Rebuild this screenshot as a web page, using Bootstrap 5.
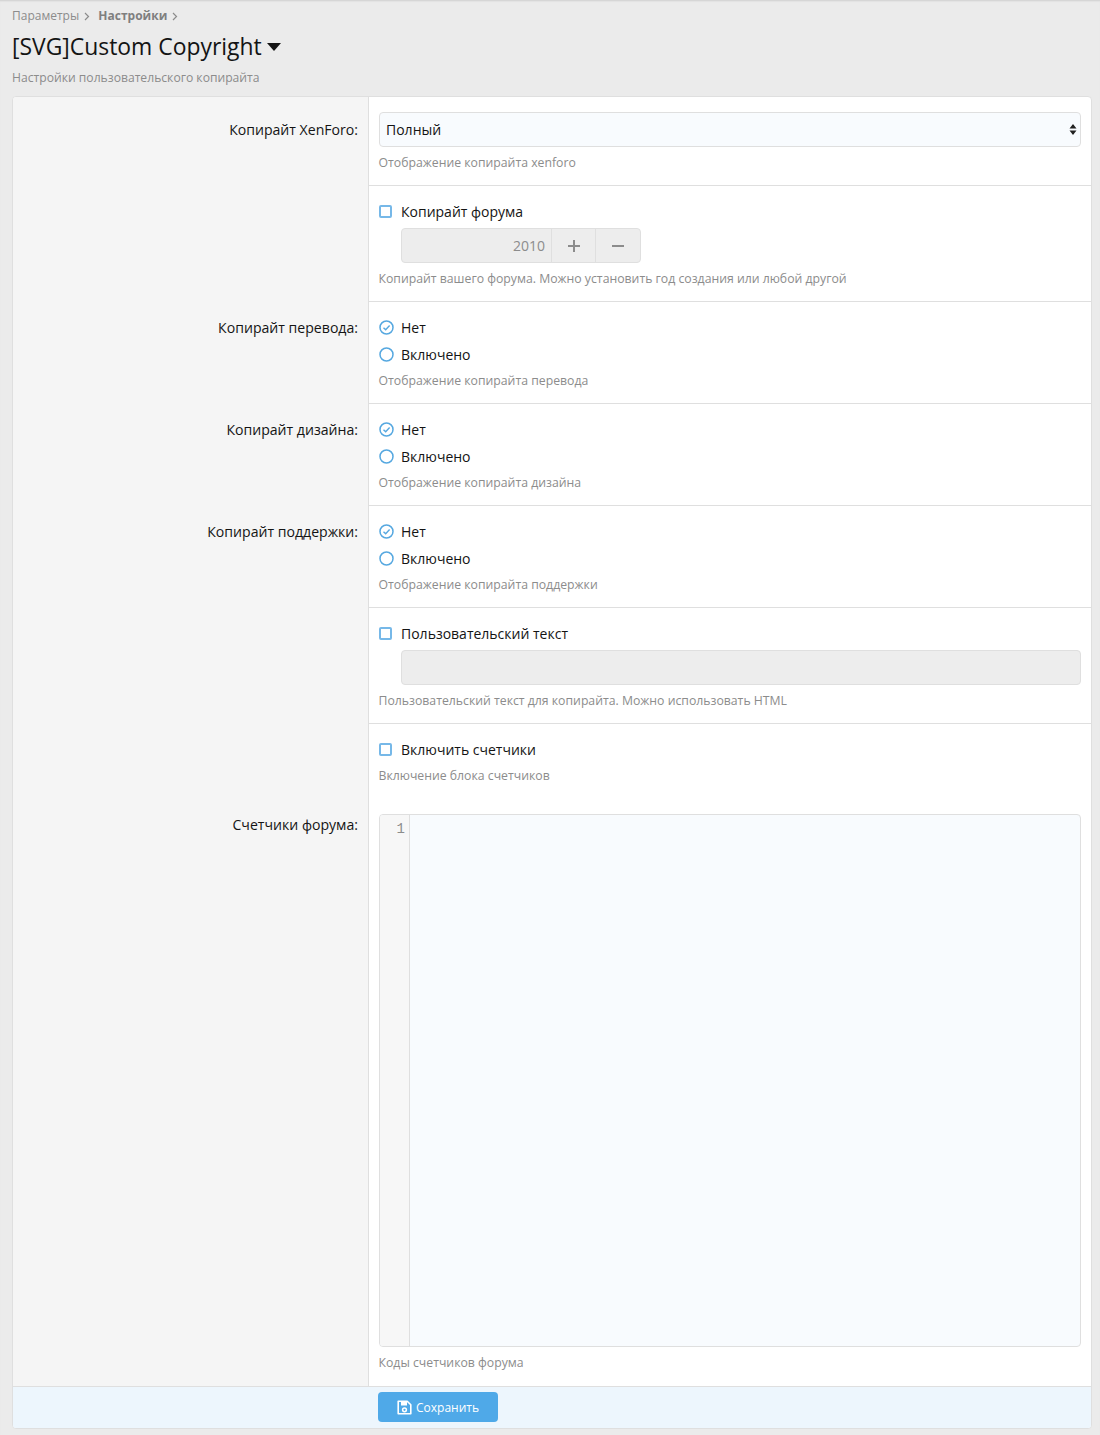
<!DOCTYPE html>
<html lang="ru">
<head>
<meta charset="utf-8">
<title>[SVG]Custom Copyright</title>
<link href="https://cdn.jsdelivr.net/npm/bootstrap@5.3.0/dist/css/bootstrap.min.css" rel="stylesheet">
<style>
html,body{height:100%}
body{background:#ebebeb;font-family:"Open Sans","Noto Sans","Liberation Sans",sans-serif;font-size:14px;line-height:20px;color:#141414;box-shadow:inset 0 2px 2px -1px #cfcfcf}
.page-wrap{padding:7px 8px 0 12px}
.crumbs{font-size:12px;line-height:18px;color:#8c8c8c;height:18px}
.crumbs b{color:#7f7f7f;font-weight:700}
.crumbs svg{margin:0 4px 0 4px;vertical-align:-1px}
.page-title{font-size:22.9px;line-height:32px;font-weight:400;margin:6px 0 0;color:#141414}
.title-caret{display:inline-block;width:0;height:0;border-left:7px solid transparent;border-right:7px solid transparent;border-top:8px solid #141414;vertical-align:4px;margin-left:5px}
.page-desc{font-size:12.15px;line-height:18px;color:#8c8c8c;margin-top:6px;height:18px}
.form-panel{margin-top:9px;border:1px solid #dfdfdf;border-radius:4px;background:#fff;overflow:hidden;width:1080px}
.form-line{display:flex}
.line-label{width:355px;flex:none;background:#f5f5f5;text-align:right;padding:16px 10px 0 0;font-size:14.1px;line-height:20px;color:#141414}
.line-label.lbl-first{padding-top:23px}
.line-label.lbl-code{padding-top:17px}
.line-body{flex:1;border-left:1px solid #dfdfdf;border-bottom:1px solid #dfdfdf;padding:12px 10px 13px}
.line-body.no-rule{border-bottom:0}
.line-body.pad-select{padding-top:15px}
.line-body.pad-code{padding:16px 10px 14px}
.hint{font-size:12.25px;line-height:18px;color:#8c8c8c;margin-left:-.5px}
.select-box{height:35px;background:#f8fbfe;border:1px solid #dfdfdf;border-radius:4px;padding:0 3px 0 6px;display:flex;align-items:center;justify-content:space-between;margin-bottom:7px}
.check-row{display:flex;align-items:center;height:27px;gap:9px}
.check-row:has(+ .hint){margin-bottom:4px}
.check-box{width:13px;height:13px;border:2px solid #76b8e8;border-radius:2px;flex:none}
.radio-dot{width:15px;height:15px;flex:none;margin-right:-2px}
.field-off{height:35px;background:#ededed;border:1px solid #dfdfdf;border-radius:4px;margin:3px 0 7px 22px}
.spin-box{display:flex;height:35px;width:240px;margin:3px 0 7px 22px;background:#ededed;border:1px solid #dfdfdf;border-radius:4px;color:#8c8c8c}
.spin-val{flex:1;text-align:right;padding-right:6px;line-height:33px}
.spin-btn{width:44px;border-left:1px solid #dfdfdf;display:flex;align-items:center;justify-content:center}
.spin-btn:last-child{width:45px}
.code-box{height:533px;display:flex;background:#f8fbfe;border:1px solid #dfdfdf;border-radius:4px;overflow:hidden;margin-bottom:7px}
.code-gutter{width:30px;background:#f7f7f7;border-right:1px solid #dfdfdf;text-align:right;padding:4px 4px 0 0;font-family:"Liberation Mono","DejaVu Sans Mono",monospace;font-size:14px;line-height:20px;color:#8c8c8c}
.save-bar{height:42px;background:#edf6fd;border-top:1px solid #dfdfdf;padding:5px 0 0 365px}
.save-btn{display:inline-flex;align-items:center;justify-content:center;gap:4px;width:120px;height:30px;background:#4fa9e8;border:0;border-radius:4px;color:#fff;font-size:12px;padding:1px 0 0}
.save-btn:hover{background:#4fa9e8;color:#fff}
</style>
</head>
<body>
<div class="page-wrap">
  <div class="crumbs">Параметры<svg width="8" height="9" viewBox="0 0 8 9"><path d="M2 1l3.5 3.5L2 8" fill="none" stroke="#8c8c8c" stroke-width="1.2"/></svg> <b>Настройки</b><svg width="8" height="9" viewBox="0 0 8 9"><path d="M2 1l3.5 3.5L2 8" fill="none" stroke="#8c8c8c" stroke-width="1.2"/></svg></div>
  <h1 class="page-title">[SVG]Custom Copyright<span class="title-caret"></span></h1>
  <div class="page-desc">Настройки пользовательского копирайта</div>
  <div class="form-panel">
    <div class="form-line">
      <div class="line-label lbl-first">Копирайт XenForo:</div>
      <div class="line-body pad-select">
        <div class="select-box"><span>Полный</span><svg width="8" height="11" viewBox="0 0 8 11"><path d="M4 0l3.5 4.5h-7zM4 11L.5 6.5h7z" fill="#222"/></svg></div>
        <div class="hint">Отображение копирайта xenforo</div>
      </div>
    </div>
    <div class="form-line">
      <div class="line-label"></div>
      <div class="line-body">
        <div class="check-row"><span class="check-box"></span>Копирайт форума</div>
        <div class="spin-box"><div class="spin-val">2010</div>
          <div class="spin-btn"><svg width="12" height="12" viewBox="0 0 12 12"><path d="M6 0v12M0 6h12" stroke="#8c8c8c" stroke-width="2"/></svg></div>
          <div class="spin-btn"><svg width="12" height="12" viewBox="0 0 12 12"><path d="M0 6h12" stroke="#8c8c8c" stroke-width="2"/></svg></div></div>
        <div class="hint">Копирайт вашего форума. Можно установить год создания или любой другой</div>
      </div>
    </div>
    <div class="form-line">
      <div class="line-label">Копирайт перевода:</div>
      <div class="line-body">
        <div class="check-row"><svg class="radio-dot" viewBox="0 0 15 15"><circle cx="7.5" cy="7.5" r="6.5" fill="none" stroke="#56a8e0" stroke-width="1.5"/><path d="M4.5 7.7l2.2 2.1 3.9-4.2" fill="none" stroke="#56a8e0" stroke-width="1.4"/></svg>Нет</div>
        <div class="check-row"><svg class="radio-dot" viewBox="0 0 15 15"><circle cx="7.5" cy="7.5" r="6.5" fill="none" stroke="#56a8e0" stroke-width="1.5"/></svg>Включено</div>
        <div class="hint">Отображение копирайта перевода</div>
      </div>
    </div>
    <div class="form-line">
      <div class="line-label">Копирайт дизайна:</div>
      <div class="line-body">
        <div class="check-row"><svg class="radio-dot" viewBox="0 0 15 15"><circle cx="7.5" cy="7.5" r="6.5" fill="none" stroke="#56a8e0" stroke-width="1.5"/><path d="M4.5 7.7l2.2 2.1 3.9-4.2" fill="none" stroke="#56a8e0" stroke-width="1.4"/></svg>Нет</div>
        <div class="check-row"><svg class="radio-dot" viewBox="0 0 15 15"><circle cx="7.5" cy="7.5" r="6.5" fill="none" stroke="#56a8e0" stroke-width="1.5"/></svg>Включено</div>
        <div class="hint">Отображение копирайта дизайна</div>
      </div>
    </div>
    <div class="form-line">
      <div class="line-label">Копирайт поддержки:</div>
      <div class="line-body">
        <div class="check-row"><svg class="radio-dot" viewBox="0 0 15 15"><circle cx="7.5" cy="7.5" r="6.5" fill="none" stroke="#56a8e0" stroke-width="1.5"/><path d="M4.5 7.7l2.2 2.1 3.9-4.2" fill="none" stroke="#56a8e0" stroke-width="1.4"/></svg>Нет</div>
        <div class="check-row"><svg class="radio-dot" viewBox="0 0 15 15"><circle cx="7.5" cy="7.5" r="6.5" fill="none" stroke="#56a8e0" stroke-width="1.5"/></svg>Включено</div>
        <div class="hint">Отображение копирайта поддержки</div>
      </div>
    </div>
    <div class="form-line">
      <div class="line-label"></div>
      <div class="line-body">
        <div class="check-row"><span class="check-box"></span>Пользовательский текст</div>
        <div class="field-off"></div>
        <div class="hint">Пользовательский текст для копирайта. Можно использовать HTML</div>
      </div>
    </div>
    <div class="form-line">
      <div class="line-label"></div>
      <div class="line-body no-rule">
        <div class="check-row"><span class="check-box"></span>Включить счетчики</div>
        <div class="hint">Включение блока счетчиков</div>
      </div>
    </div>
    <div class="form-line">
      <div class="line-label lbl-code">Счетчики форума:</div>
      <div class="line-body no-rule pad-code">
        <div class="code-box"><div class="code-gutter">1</div></div>
        <div class="hint">Коды счетчиков форума</div>
      </div>
    </div>
    <div class="save-bar"><button type="button" class="btn save-btn"><svg width="15" height="15" viewBox="0 0 15 15"><path d="M1.2 1.2h9l3.6 3.6v9H1.2z" fill="none" stroke="#fff" stroke-width="1.6" stroke-linejoin="round"/><path d="M4 1.5h6v4H4z" fill="#fff"/><circle cx="7.5" cy="9.8" r="1.9" fill="none" stroke="#fff" stroke-width="1.5"/></svg>Сохранить</button></div>
  </div>
</div>
</body>
</html>
